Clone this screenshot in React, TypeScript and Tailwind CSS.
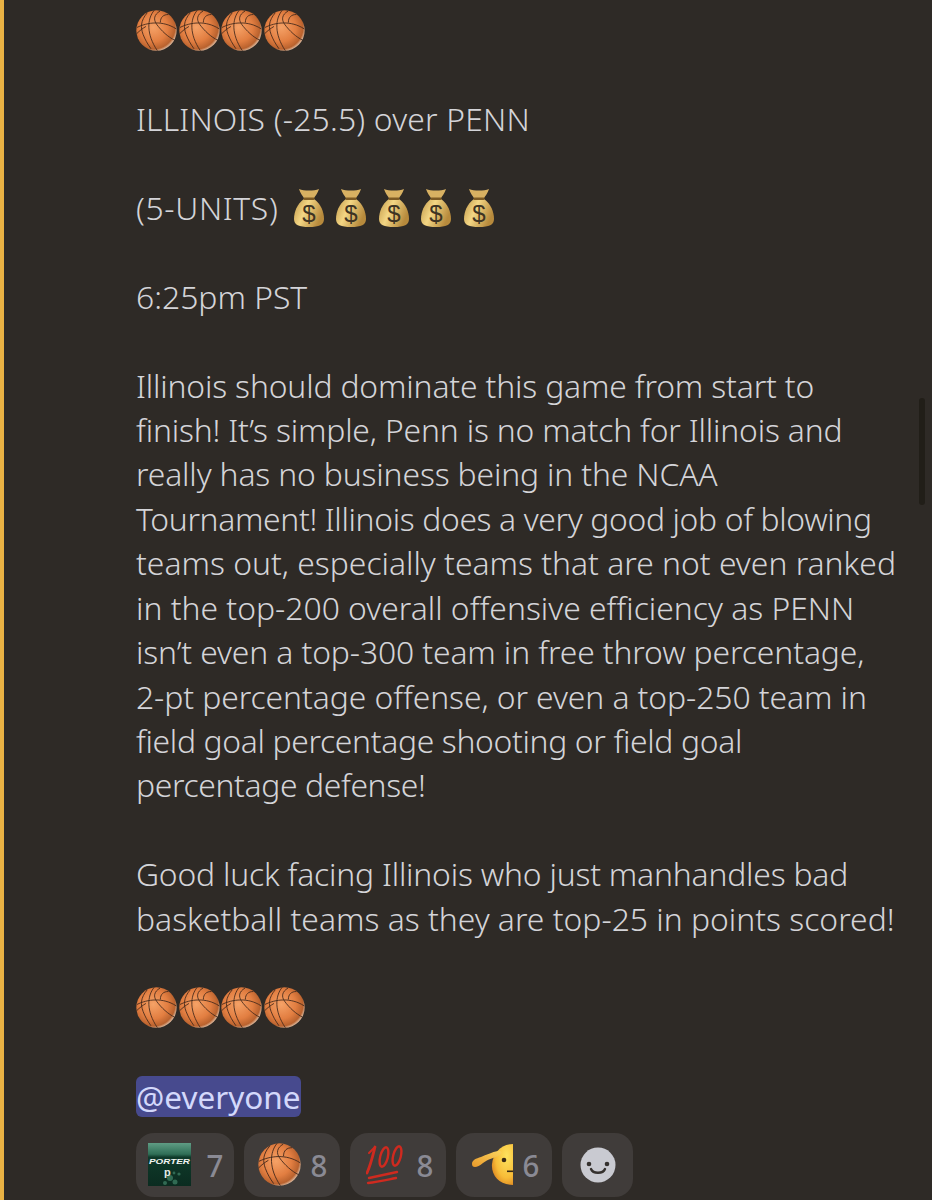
import React from "react";

function Ball({ size = 41 }: { size?: number }) {
  const id = "ballgrad";
  return (
    <svg width={size} height={size} viewBox="0 0 64 64" className="shrink-0">
      <defs>
        <radialGradient id={id} cx="42%" cy="42%" r="60%">
          <stop offset="0%" stopColor="#f5a267" />
          <stop offset="60%" stopColor="#e27e41" />
          <stop offset="90%" stopColor="#b9622e" />
          <stop offset="100%" stopColor="#d9b092" />
        </radialGradient>
      </defs>
      <circle cx="32" cy="32" r="31.5" fill={`url(#${id})`} />
      <g fill="none" stroke="#3d2519" strokeWidth="1.3" strokeLinecap="round">
        <path d="M2 27 C18 19 42 16 62 29" />
        <path d="M28 1 C17 14 16 38 33 63" />
        <path d="M17 5 C7 17 7 27 11 38 C14 46 18 53 23 60" />
        <path d="M37 2 C28 7 27 15 32 22 C40 33 50 42 60 47" />
        <path d="M50 7 C43 7 38 11 38 19" />
        <path d="M1 37 C6 32 10 29 15 26" />
      </g>
    </svg>
  );
}

function Bag() {
  return (
    <svg width="30" height="40" viewBox="0 0 30 40" className="shrink-0">
      <defs>
        <linearGradient id="baggrad" x1="0" y1="0" x2="1" y2="0.4">
          <stop offset="0%" stopColor="#c09748" />
          <stop offset="45%" stopColor="#f3d684" />
          <stop offset="100%" stopColor="#b78a3c" />
        </linearGradient>
      </defs>
      <path d="M5 1 C10 3 20 3 25 1 C24 5 21 8 19.500 11 L10.500 11 C9 8 6 5 5 1Z" fill="#d8b162" />
      <path d="M10 11 C3 16 0 24 0 31 C0 37 5 39 15 39 C25 39 30 37 30 31 C30 24 27 16 20 11Z" fill="url(#baggrad)" />
      <rect x="9.500" y="9.500" width="11" height="2.400" rx="1" fill="#7c5a24" />
      <text x="15" y="33.500" textAnchor="middle" fontFamily="'Liberation Sans', sans-serif" fontSize="24" fill="#3d3323">$</text>
    </svg>
  );
}

function Hundred() {
  return (
    <svg width="38" height="40" viewBox="0 0 38 40" className="shrink-0">
      <g fill="none" stroke="#cf2a1f" strokeLinecap="round">
        <path d="M8 3 L3 8" strokeWidth="2" />
        <path d="M9 2 C7 10 5 19 1 28" strokeWidth="2.800" />
        <ellipse cx="18" cy="12" rx="3.800" ry="10" strokeWidth="2.400" transform="rotate(14 18 12)" />
        <ellipse cx="31" cy="11" rx="3.800" ry="10" strokeWidth="2.400" transform="rotate(14 31 11)" />
        <path d="M3 33 C12 31 22 29 31 27" strokeWidth="2.400" />
        <path d="M2 38 C12 37 20 35 30 33" strokeWidth="2.400" />
      </g>
    </svg>
  );
}

function Salute() {
  return (
    <svg width="42" height="42" viewBox="0 0 42 42" className="shrink-0">
      <defs>
        <radialGradient id="sal" cx="70%" cy="30%" r="80%">
          <stop offset="0%" stopColor="#fde35f" />
          <stop offset="65%" stopColor="#f8bd38" />
          <stop offset="100%" stopColor="#dc8420" />
        </radialGradient>
        <linearGradient id="arm" x1="0" y1="1" x2="1" y2="0">
          <stop offset="0%" stopColor="#e8992a" />
          <stop offset="100%" stopColor="#fbd45e" />
        </linearGradient>
      </defs>
      <path d="M41 0 L41 41 C28 41 19 32 20 20 C21 9 29 0 41 0Z" fill="url(#sal)" />
      <path d="M0 20 C0 16 4 14.500 9 13 C14 11 20 8 26 7 C30 6.500 31 9 27 11.500 C22 14 16 15 11 19 C8 21.500 5 23 3 23 C1 23 0 22 0 20Z" fill="url(#arm)" />
      <circle cx="32" cy="16" r="2.300" fill="#3a2a15" />
      <rect x="35" y="26.500" width="6" height="1.600" fill="#3a2a15" />
    </svg>
  );
}

function Porter() {
  return (
    <svg width="43" height="43" viewBox="0 0 43 43" className="shrink-0">
      <defs>
        <linearGradient id="pg" x1="0" y1="0" x2="0" y2="1">
          <stop offset="0%" stopColor="#5f9c84" />
          <stop offset="26%" stopColor="#2f6e56" />
          <stop offset="33%" stopColor="#0f3a2a" />
          <stop offset="100%" stopColor="#0b2c20" />
        </linearGradient>
      </defs>
      <rect width="43" height="43" fill="url(#pg)" />
      <g fill="#3b7a60" opacity="0.8">
        <circle cx="22" cy="35" r="3" />
        <circle cx="27" cy="39" r="2.500" />
        <circle cx="17" cy="40" r="2" />
        <circle cx="31" cy="31" r="1.600" />
        <circle cx="26" cy="30" r="1.400" />
      </g>
      <text x="1" y="21" textLength="41" lengthAdjust="spacingAndGlyphs" fontFamily="'Liberation Sans', sans-serif" fontWeight="700" fontStyle="italic" fontSize="8" fill="#f2f5f3">PORTER</text>
      <text x="16" y="33" fontFamily="'Liberation Sans', sans-serif" fontWeight="700" fontSize="11" fill="#e4ebe7">p</text>
    </svg>
  );
}

function Smiley() {
  return (
    <svg width="36" height="36" viewBox="0 0 36 36">
      <circle cx="18" cy="18" r="17.500" fill="#c9cad1" />
      <circle cx="9" cy="17" r="2.300" fill="#35312e" />
      <circle cx="27" cy="17" r="2.300" fill="#35312e" />
      <path d="M11 22 C13 27 23 27 25 22" fill="none" stroke="#35312e" strokeWidth="2.400" strokeLinecap="round" />
    </svg>
  );
}

function Reaction({ icon, count, className, gap }: { icon: React.ReactNode; count: string; className: string; gap: string }) {
  return (
    <div className={`h-[64px] rounded-[18px] bg-[#403c3a] flex items-center ${className}`}>
      {icon}
      <span className={`text-[31px] text-[#8a8a94] font-medium scale-x-[.95] ${gap}`}>{count}</span>
    </div>
  );
}

function L({ children, className = "" }: { children?: React.ReactNode; className?: string }) {
  return <div className={`h-[44.45px] leading-[44.45px] whitespace-nowrap ${className}`}>{children ?? "\u00a0"}</div>;
}

export default function App() {
  return (
    <div className="relative w-[932px] h-[1200px] overflow-hidden bg-[#2e2a26] border-l-[4px] border-[#e9b244] font-['Noto_Sans',sans-serif] text-[31.85px] font-light text-[#d4d4d8]">
      <div className="pl-[132px] pt-[8px]">
        <L>
          <span className="flex h-full items-center gap-[1.500px]">
            <Ball /><Ball /><Ball /><Ball />
          </span>
        </L>
        <L />
        <L className="tracking-[0.2px]">ILLINOIS (-25.5) over PENN</L>
        <L />
        <L>
          <span className="flex h-full items-center">
            <span className="w-[157.500px] tracking-[0.65px]">(5-UNITS)</span>
            <span className="flex items-center gap-[12.500px]">
              <Bag /><Bag /><Bag /><Bag /><Bag />
            </span>
          </span>
        </L>
        <L />
        <L>6:25pm PST</L>
        <L />
        <L className="tracking-[-0.16px]">Illinois should dominate this game from start to</L>
        <L className="tracking-[-0.17px]">finish! It’s simple, Penn is no match for Illinois and</L>
        <L className="tracking-[-0.15px]">really has no business being in the NCAA</L>
        <L className="tracking-[-0.35px]">Tournament! Illinois does a very good job of blowing</L>
        <L>teams out, especially teams that are not even ranked</L>
        <L>in the top-200 overall offensive efficiency as PENN</L>
        <L className="tracking-[-0.12px]">isn’t even a top-300 team in free throw percentage,</L>
        <L className="tracking-[-0.08px]">2-pt percentage offense, or even a top-250 team in</L>
        <L className="tracking-[-0.34px]">field goal percentage shooting or field goal</L>
        <L className="tracking-[-0.37px]">percentage defense!</L>
        <L />
        <L className="tracking-[-0.2px]">Good luck facing Illinois who just manhandles bad</L>
        <L>basketball teams as they are top-25 in points scored!</L>
        <L />
        <L>
          <span className="flex h-full items-center gap-[1.500px]">
            <Ball /><Ball /><Ball /><Ball />
          </span>
        </L>
        <L />
        <L>
          <span className="inline-block h-[41px] leading-[41px] rounded-[6px] bg-[#474a8e] text-[#d3d8fb] font-normal text-[31.500px]">@everyone</span>
        </L>
        <div className="flex gap-[10px] mt-[14px]">
          <Reaction icon={<Porter />} count="7" className="w-[98px] pl-[12px]" gap="ml-[15px]" />
          <Reaction icon={<Ball size={43} />} count="8" className="w-[96px] pl-[14px]" gap="ml-[9px]" />
          <Reaction icon={<Hundred />} count="8" className="w-[96px] pl-[16px]" gap="ml-[12px]" />
          <Reaction icon={<Salute />} count="6" className="w-[96px] pl-[16px]" gap="ml-[8px]" />
          <div className="w-[71px] h-[64px] rounded-[18px] bg-[#403c3a] flex items-center justify-center">
            <Smiley />
          </div>
        </div>
      </div>
      <div className="absolute left-[915px] top-[398px] w-[6px] h-[107px] rounded-full bg-[#211e18]" />
    </div>
  );
}
